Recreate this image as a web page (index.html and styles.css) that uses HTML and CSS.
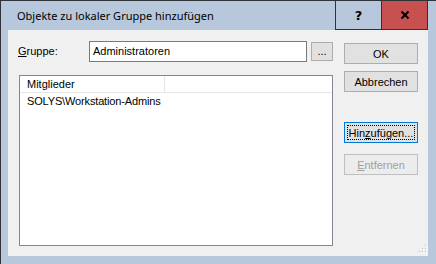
FILE: index.html
```html
<!DOCTYPE html>
<html>
<head>
<meta charset="utf-8">
<link rel="stylesheet" href="styles.css">
</head>
<body>
<div class="window">
  <div class="titlebar">
    <div class="title">Objekte zu lokaler Gruppe hinzufügen</div>
    <div class="caption-buttons">
      <div class="cap help">?</div>
      <div class="cap close">
        <svg width="10" height="10" viewBox="0 0 10 10"><path d="M1.5 1.5 L8.5 8.5 M8.5 1.5 L1.5 8.5" stroke="#000" stroke-width="2"/></svg>
      </div>
    </div>
  </div>
  <div class="client">
    <div class="left">
      <div class="group-row">
        <span class="label"><u>G</u>ruppe:</span>
        <div class="input">Administratoren</div>
        <div class="btn small">...</div>
      </div>
      <div class="list">
        <div class="header">
          <div class="col">Mitglieder</div>
          <div class="col-rest"></div>
        </div>
        <div class="item">SOLYS\Workstation-Admins</div>
      </div>
    </div>
    <div class="right">
      <div class="btn">OK</div>
      <div class="btn b2">Abbrechen</div>
      <div class="btn focus b3"><span class="focusrect">Hin<u>z</u>ufügen...</span></div>
      <div class="btn disabled b4"><u>E</u>ntfernen</div>
    </div>
    <svg class="grip" width="12" height="12" viewBox="0 0 12 12">
      <rect x="9" y="1" width="1" height="1" fill="#bcbcbc"/><rect x="10" y="2" width="1" height="1" fill="#fff"/>
      <rect x="6" y="4" width="1" height="1" fill="#bcbcbc"/><rect x="7" y="5" width="1" height="1" fill="#fff"/>
      <rect x="9" y="4" width="1" height="1" fill="#bcbcbc"/><rect x="10" y="5" width="1" height="1" fill="#fff"/>
      <rect x="3" y="7" width="1" height="1" fill="#bcbcbc"/><rect x="4" y="8" width="1" height="1" fill="#fff"/>
      <rect x="6" y="7" width="1" height="1" fill="#bcbcbc"/><rect x="7" y="8" width="1" height="1" fill="#fff"/>
      <rect x="9" y="7" width="1" height="1" fill="#bcbcbc"/><rect x="10" y="8" width="1" height="1" fill="#fff"/>
    </svg>
  </div>
</div>
</body>
</html>
```

FILE: styles.css
```css
* { box-sizing: border-box; }
html, body { margin: 0; padding: 0; }
body { width: 436px; height: 264px; overflow: hidden; background: #b7c8dc; }
.window {
  width: 436px; height: 264px;
  background: #b7c8dc;
  border-left: 1px solid #2f3338;
  border-top: 1px solid #2f3338;
  display: flex; flex-direction: column;
  padding: 0 8px 8px 7px;
}
.titlebar {
  height: 29px; flex: none;
  display: flex; align-items: flex-start;
}
.title {
  font-family: "Noto Sans", "Open Sans", sans-serif;
  font-size: 11px;
  color: #000;
  padding: 7px 0 0 9px;
  line-height: 16px;
  flex: 1;
}
.caption-buttons {
  display: flex;
  margin-top: -1px;
  height: 30px;
  border: 1px solid #2f3338;
}
.cap {
  height: 28px;
  display: flex; align-items: center; justify-content: center;
  font-family: "DejaVu Sans", sans-serif; font-weight: bold; font-size: 13px;
}
.help { width: 46px; border-right: 1px solid #2f3338; background: #b7c8dc; }
.close { width: 45px; background: #c75050; }
.client {
  flex: 1;
  background: #f0f0f0;
  position: relative;
  display: flex;
  padding: 11px 0 0 10px;
  font-family: "Liberation Sans", Arial, sans-serif;
  font-size: 11px;
  color: #000;
}
.left { width: 315px; display: flex; flex-direction: column; }
.group-row { display: flex; align-items: flex-start; height: 21px; }
.label { width: 71px; padding-top: 4px; }
.input {
  width: 218px; height: 21px;
  background: #fff; border: 1px solid #7a7a7a;
  padding: 3px 0 0 3px;
}
.btn {
  width: 74px; height: 21px;
  background: #e1e1e1; border: 1px solid #adadad;
  display: flex; align-items: center; justify-content: center;
}
.btn.small { width: 22px; height: 19px; margin: 1px 0 0 4px; padding-bottom: 2px; }
.list {
  margin: 13px 0 0 1px;
  width: 314px; height: 171px;
  background: #fff; border: 1px solid #828790;
}
.header { display: flex; height: 17px; border-bottom: 1px solid #e5e5e5; }
.col { width: 145px; border-right: 1px solid #e5e5e5; padding: 2px 0 0 7px; }
.col-rest { flex: 1; }
.item { padding: 2px 0 0 7px; height: 16px; letter-spacing: -0.15px; }
.right { margin-left: 11px; padding-top: 2px; display: flex; flex-direction: column; }
.b2 { margin-top: 7px; }
.b3 { margin-top: 30px; }
.b4 { margin-top: 11px; }
.btn.focus { border-color: #0078d7; padding: 2px; }
.focusrect {
  flex: 1; align-self: stretch;
  border: 1px dotted #000;
  display: flex; align-items: center; justify-content: center;
}
.btn.disabled { background: #ececec; border-color: #bfbfbf; color: #a0a0a0; }
.grip { position: absolute; right: 0; bottom: 0; }
u { text-decoration: underline; text-underline-offset: 1px; }
```
